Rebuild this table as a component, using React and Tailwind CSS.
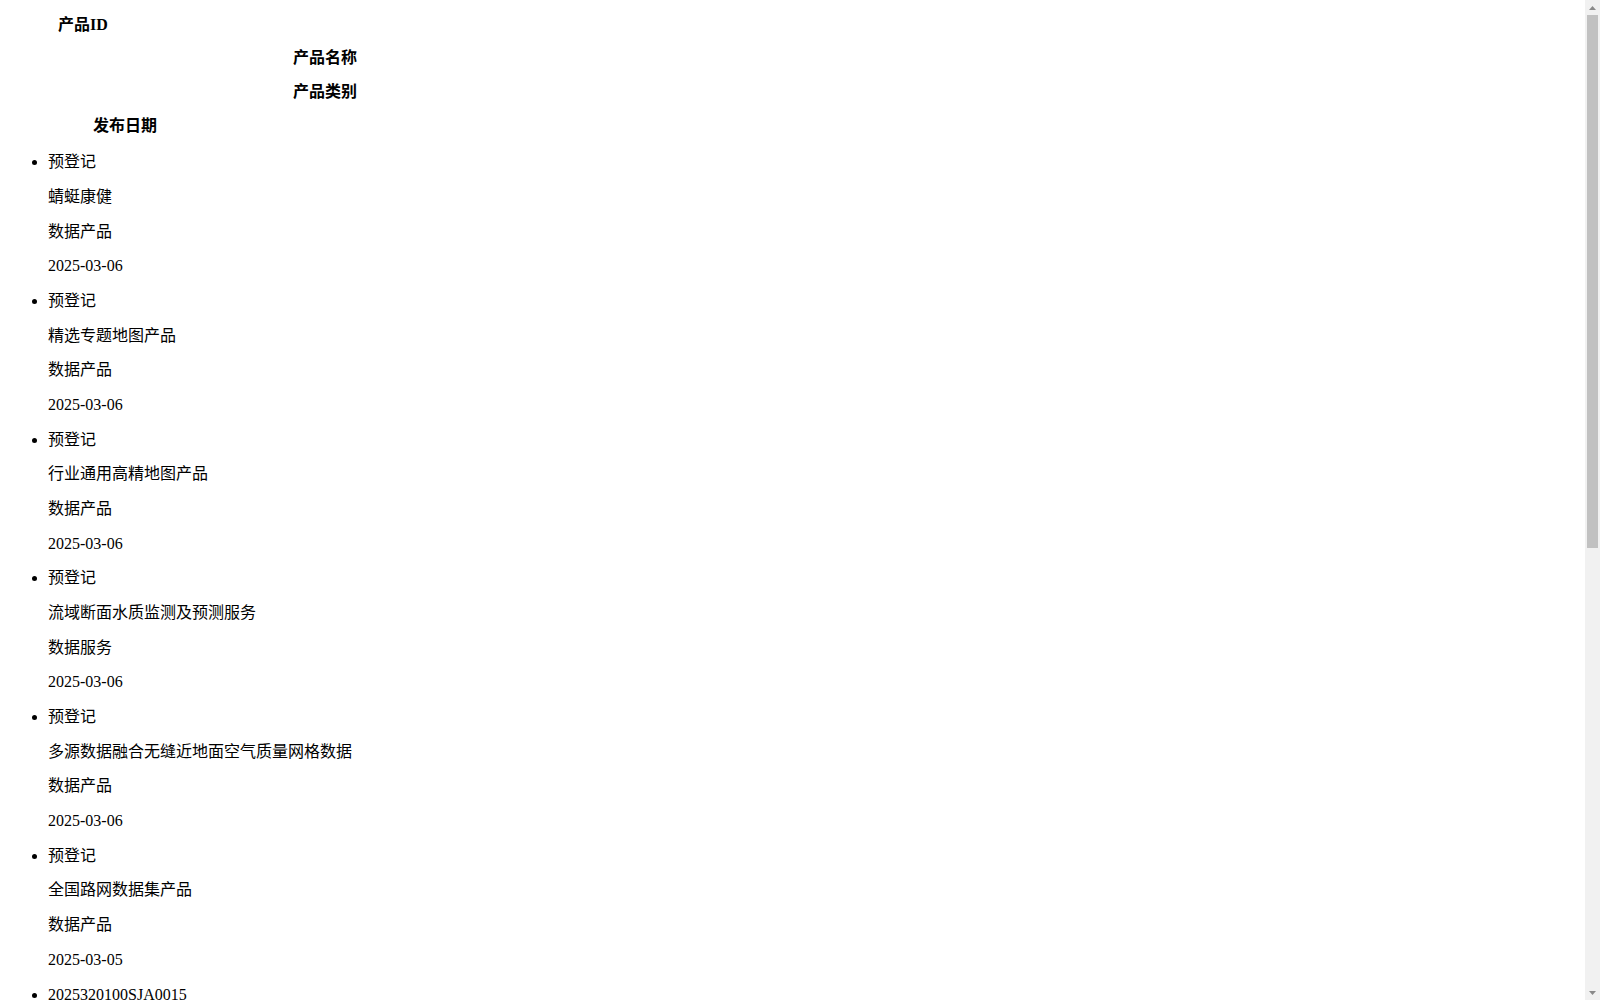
import React from "react";

const items = [
  ["预登记", "蜻蜓康健", "数据产品", "2025-03-06"],
  ["预登记", "精选专题地图产品", "数据产品", "2025-03-06"],
  ["预登记", "行业通用高精地图产品", "数据产品", "2025-03-06"],
  ["预登记", "流域断面水质监测及预测服务", "数据服务", "2025-03-06"],
  ["预登记", "多源数据融合无缝近地面空气质量网格数据", "数据产品", "2025-03-06"],
  ["预登记", "全国路网数据集产品", "数据产品", "2025-03-05"],
  ["2025320100SJA0015", "城市交通出行数据产品", "数据产品", "2025-03-05"],
  ["2025320100SJA0014", "企业信用评价数据产品", "数据产品", "2025-03-04"],
  ["预登记", "气象环境监测数据服务", "数据服务", "2025-03-04"],
  ["2025320100SJA0013", "农业遥感影像数据集", "数据产品", "2025-03-03"],
  ["预登记", "医疗健康数据分析服务", "数据服务", "2025-03-03"],
  ["2025320100SJA0012", "物流运输轨迹数据产品", "数据产品", "2025-03-02"],
];

const font = {
  fontFamily: '"Liberation Serif", "Noto Sans CJK SC", serif',
};

function Scrollbar() {
  return (
    <div className="fixed right-0 top-0 h-[1000px] w-[15px] bg-[#f1f1f1] flex flex-col">
      <div className="h-[15px] flex items-center justify-center">
        <svg width="7" height="4" viewBox="0 0 7 4">
          <polygon points="3.5,0 7,4 0,4" fill="#8a8a8a" />
        </svg>
      </div>
      <div className="h-[533px] mx-[2px] bg-[#c1c1c1]" />
      <div className="flex-1" />
      <div className="h-[15px] flex items-center justify-center">
        <svg width="7" height="4" viewBox="0 0 7 4">
          <polygon points="0,0 7,0 3.5,4" fill="#8a8a8a" />
        </svg>
      </div>
    </div>
  );
}

export default function App() {
  return (
    <div className="h-[1000px] w-full overflow-hidden bg-white">
      <div
        className="text-black text-[16px] pt-[7.7px] pb-[16px] pr-[15px]"
        style={font}
      >
        <div className="font-bold leading-[33.67px] pl-[58px]">产品ID</div>
        <div className="font-bold leading-[33.67px] pl-[293px]">产品名称</div>
        <div className="font-bold leading-[33.67px] pl-[293px]">产品类别</div>
        <div className="font-bold leading-[33.67px] pl-[93px]">发布日期</div>
        <ul className="list-disc pl-[48px] mt-[3px]">
          {items.map((it, i) => (
            <li key={i}>
              {it.map((t, j) => (
                <div key={j} className="leading-[34.67px]">
                  {t}
                </div>
              ))}
            </li>
          ))}
        </ul>
      </div>
      <Scrollbar />
    </div>
  );
}
